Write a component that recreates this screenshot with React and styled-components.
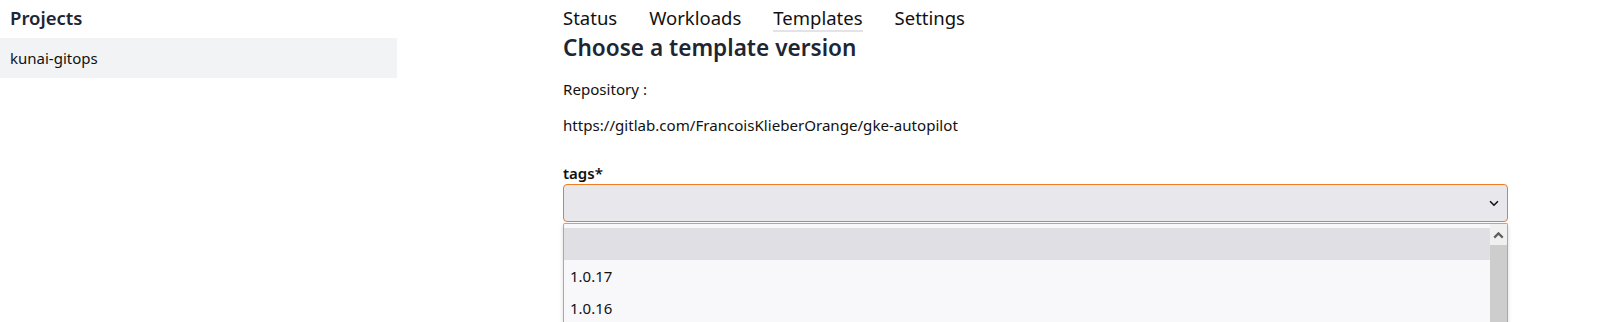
import React from 'react';
import styled, { createGlobalStyle } from 'styled-components';

const GlobalStyle = createGlobalStyle`
	body {
		margin: 0;
		background: #fff;
		font-family: 'Noto Sans', 'Open Sans', sans-serif;
		color: #111;
	}
`;

const tabs = ['Status', 'Workloads', 'Templates', 'Settings'];
const versions = ['', '1.0.17', '1.0.16'];

const App = () => {
	return (
		<>
			<GlobalStyle />
			<Page>
				<Sidebar>
					<SideTitle>Projects</SideTitle>
					<ProjectRow>kunai-gitops</ProjectRow>
				</Sidebar>
				<Main>
					<Tabs>
						{tabs.map((t) => (
							<Tab key={t} active={t === 'Templates'}>
								{t}
							</Tab>
						))}
					</Tabs>
					<Heading>Choose a template version</Heading>
					<Text>Repository :</Text>
					<Text>https://gitlab.com/FrancoisKlieberOrange/gke-autopilot</Text>
					<Label>tags*</Label>
					<Select>
						<Chevron viewBox='0 0 16 16'>
							<path d='M3.5 6 L8 10.5 L12.5 6' />
						</Chevron>
					</Select>
					<Dropdown>
						<Options>
							{versions.map((v, i) => (
								<Option key={i} selected={i === 0}>
									{v}
								</Option>
							))}
						</Options>
						<Scrollbar>
							<ScrollUp viewBox='0 0 16 16'>
								<path d='M4 10 L8 6 L12 10' />
							</ScrollUp>
							<Thumb />
						</Scrollbar>
					</Dropdown>
				</Main>
			</Page>
		</>
	);
};

export default App;

const Page = styled.div`
	display: flex;
	height: 322px;
	overflow: hidden;
`;

const Sidebar = styled.aside`
	width: 397px;
	flex-shrink: 0;
`;

const SideTitle = styled.h2`
	margin: 0;
	height: 38px;
	box-sizing: border-box;
	padding: 0 10px 3px;
	display: flex;
	align-items: center;
	font-size: 18.5px;
	font-weight: 600;
	color: #1e2533;
`;

const ProjectRow = styled.div`
	height: 40px;
	padding: 0 10px;
	display: flex;
	align-items: center;
	background: #f2f3f5;
	font-size: 15px;
	color: #111;
`;

const Main = styled.main`
	margin-left: 166px;
	width: 945px;
	display: flex;
	flex-direction: column;
`;

const Tabs = styled.nav`
	display: flex;
	gap: 32px;
	padding-top: 5px;
`;

const Tab = styled.span`
	font-size: 18.5px;
	line-height: 25px;
	color: #111;
	border-bottom: 2px solid ${(p) => (p.active ? '#e4e3ea' : 'transparent')};
`;

const Heading = styled.h1`
	margin: 0;
	font-size: 22.6px;
	line-height: 32px;
	font-weight: 600;
	color: #1e2533;
`;

const Text = styled.p`
	margin: 14px 0 0;
	font-size: 15.1px;
	line-height: 22px;
`;

const Label = styled.div`
	margin-top: 26px;
	font-size: 15px;
	line-height: 22px;
	font-weight: 600;
`;

const Select = styled.div`
	height: 38px;
	box-sizing: border-box;
	border: 1px solid #f07b22;
	border-radius: 4px;
	background: #e8e7ec;
	display: flex;
	align-items: center;
	justify-content: flex-end;
	padding-right: 6px;
`;

const Chevron = styled.svg`
	width: 14px;
	height: 14px;
	fill: none;
	stroke: #111;
	stroke-width: 1.8;
`;

const Dropdown = styled.div`
	margin-top: 1px;
	flex: 1;
	display: flex;
	border: 1px solid #a9a9a9;
	border-bottom: none;
	border-radius: 2px 2px 0 0;
	background: #f8f8fa;
	box-shadow: 0 2px 4px rgba(0, 0, 0, 0.15);
	padding-top: 4px;
	overflow: hidden;
`;

const Options = styled.div`
	flex: 1;
	display: flex;
	flex-direction: column;
`;

const Option = styled.div`
	height: 32px;
	flex-shrink: 0;
	padding: 0 6px;
	display: flex;
	align-items: center;
	font-size: 15px;
	color: #111;
	background: ${(p) => (p.selected ? '#e0dfe4' : '#f8f8fa')};
`;

const Scrollbar = styled.div`
	width: 17px;
	display: flex;
	flex-direction: column;
	background: #f0f0f0;
	margin-top: -4px;
`;

const ScrollUp = styled.svg`
	width: 17px;
	height: 21px;
	padding-top: 2px;
	box-sizing: border-box;
	fill: none;
	stroke: #606060;
	stroke-width: 2;
`;

const Thumb = styled.div`
	flex: 1;
	background: #cdcdcd;
`;
